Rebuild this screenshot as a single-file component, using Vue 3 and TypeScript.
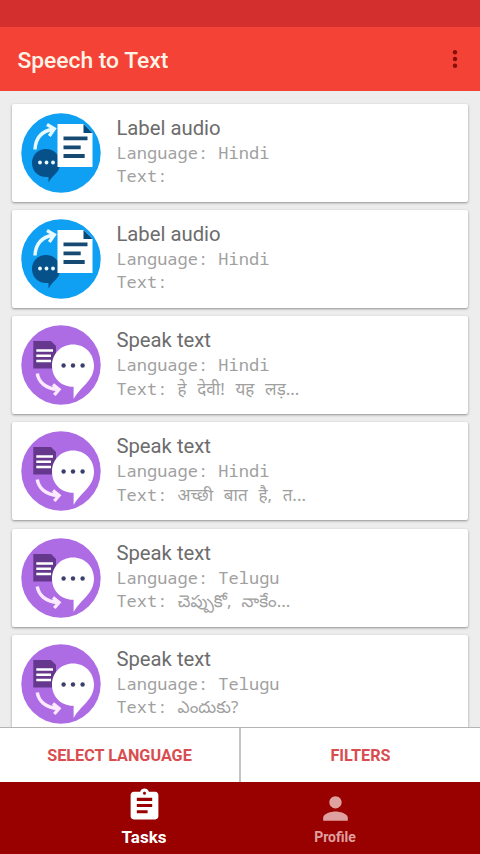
<script setup lang="ts">
interface Task {
  kind: 'label' | 'speak'
  title: string
  language: string
  text: string
  lang: string
}

const tasks: Task[] = [
  { kind: 'label', title: 'Label audio', language: 'Hindi', text: '', lang: 'hi' },
  { kind: 'label', title: 'Label audio', language: 'Hindi', text: '', lang: 'hi' },
  { kind: 'speak', title: 'Speak text', language: 'Hindi', text: 'हे देवी! यह लड़...', lang: 'hi' },
  { kind: 'speak', title: 'Speak text', language: 'Hindi', text: 'अच्छी बात है, त...', lang: 'hi' },
  { kind: 'speak', title: 'Speak text', language: 'Telugu', text: 'చెప్పుకో, నాకేం...', lang: 'te' },
  { kind: 'speak', title: 'Speak text', language: 'Telugu', text: 'ఎందుకు?', lang: 'te' },
]
</script>

<template>
  <div class="screen">
    <div class="status-bar"></div>
    <header class="app-bar">
      <h1>Speech to Text</h1>
      <svg class="more" viewBox="0 0 6 20" width="6" height="20" aria-hidden="true">
        <circle cx="3" cy="3.2" r="2.2" /><circle cx="3" cy="10" r="2.2" /><circle cx="3" cy="16.8" r="2.2" />
      </svg>
    </header>

    <main class="list">
      <article v-for="(task, i) in tasks" :key="i" class="card">
        <svg v-if="task.kind === 'label'" class="badge" viewBox="0 0 80 80" aria-hidden="true">
          <circle cx="40" cy="40" r="39.7" fill="#0fa0f3" />
          <path d="M14 36.500C14.500 25 20.500 18 32.500 16M26 11.500L33.300 15.800L28.300 23" fill="none" stroke="#e8faff" stroke-width="3.400" />
          <path d="M25 36C33 36 39 42 39 50C39 60 33 60 27.500 69.500V64C17 65 11 58 11 50C11 42 17 36 25 36Z" fill="#06518a" />
          <circle cx="19" cy="49.500" r="1.900" fill="#e8faff" /><circle cx="25.500" cy="49.500" r="1.900" fill="#e8faff" /><circle cx="32" cy="49.500" r="1.900" fill="#e8faff" />
          <path d="M36.500 11H62.500L71.500 20V54H36.500Z" fill="#fff" />
          <path d="M62.500 11L71.500 20H62.500Z" fill="#064878" />
          <path d="M42.500 25.300H66.500M42.500 34.300H59.700M42.500 43H63.700" stroke="#174a72" stroke-width="3.800" />
        </svg>
        <svg v-else class="badge" viewBox="0 0 80 80" aria-hidden="true">
          <circle cx="40" cy="40" r="39.700" fill="#ad6ce4" />
          <path d="M12.300 16H30L35 21V43.500H12.300Z" fill="#65388e" />
          <path d="M15.300 25.500H32M15.300 30.700H30M15.300 36H30" stroke="#fff" stroke-width="2.600" />
          <path d="M16.300 48.500C17.500 57 24.500 63.500 37 64.500M32 59.500L38 64.500L33.300 70" fill="none" stroke="#fbe9ff" stroke-width="3.400" />
          <path d="M52 19.600C64 19.600 73 28.800 73 40.500C73 56 60 61 52.600 74V61.700C40 62 31 52.500 31 40.700C31 29 40 19.600 52 19.600Z" fill="#fff" />
          <circle cx="42.600" cy="40.500" r="2.200" fill="#393e6d" /><circle cx="52" cy="40.500" r="2.200" fill="#393e6d" /><circle cx="61.600" cy="40.500" r="2.200" fill="#393e6d" />
        </svg>
        <div class="details">
          <h2>{{ task.title }}</h2>
          <p>Language: {{ task.language }}</p>
          <p>Text: <span class="sample" :class="task.lang" :lang="task.lang">{{ task.text }}</span></p>
        </div>
      </article>
    </main>

    <div class="actions">
      <button type="button">SELECT LANGUAGE</button>
      <button type="button">FILTERS</button>
    </div>

    <nav class="tabs">
      <a class="tab active">
        <svg viewBox="0 0 24 24" width="37" height="37" aria-hidden="true">
          <path fill="currentColor" d="M19 3h-4.180C14.400 1.840 13.300 1 12 1c-1.300 0-2.400.84-2.820 2H5c-1.100 0-2 .9-2 2v14c0 1.100.9 2 2 2h14c1.100 0 2-.9 2-2V5c0-1.100-.9-2-2-2zm-7 0c.55 0 1 .45 1 1s-.45 1-1 1-1-.45-1-1 .45-1 1-1zm2 14H7v-2h7v2zm3-4H7v-2h10v2zm0-4H7V7h10v2z" />
        </svg>
        <span>Tasks</span>
      </a>
      <a class="tab">
        <svg viewBox="0 0 24 24" width="37" height="37" aria-hidden="true">
          <path fill="currentColor" d="M12 12c2.210 0 4-1.790 4-4s-1.790-4-4-4-4 1.790-4 4 1.790 4 4 4zm0 2c-2.670 0-8 1.340-8 4v2h16v-2c0-2.660-5.330-4-8-4z" />
        </svg>
        <span>Profile</span>
      </a>
    </nav>
  </div>
</template>

<style>
body { margin: 0; overflow: hidden; }
</style>

<style scoped>
.screen {
  display: flex;
  flex-direction: column;
  width: 480px;
  height: 854px;
  overflow: hidden;
  background: #ededed;
  font-family: Roboto, "Liberation Sans", sans-serif;
}
.status-bar { flex: none; height: 27px; background: #d32f2f; }
.app-bar {
  flex: none;
  display: flex;
  align-items: center;
  justify-content: space-between;
  box-sizing: border-box;
  height: 63.5px;
  padding: 2px 22px 0 17.5px;
  background: #f44336;
}
h1 { margin: 0; padding-top: 2px; font-size: 22.8px; font-weight: 500; line-height: 28px; color: #fff3e6; }
.more { margin-bottom: 2px; fill: #850f0a; }
.list {
  flex: 1;
  min-height: 0;
  overflow: hidden;
  display: flex;
  flex-direction: column;
  gap: 8.3px;
  padding: 13px 12px 0;
}
.card {
  flex: none;
  display: flex;
  box-sizing: border-box;
  height: 98px;
  padding: 9px 8.7px;
  gap: 15.7px;
  border-radius: 2px;
  background: #fff;
  box-shadow: 0 1px 2.5px rgba(0, 0, 0, 0.4);
}
.badge { flex: none; width: 80px; height: 80px; }
.details { min-width: 0; padding-top: 2px; white-space: nowrap; }
h2 { margin: 0; font-size: 20.3px; font-weight: 400; line-height: 26px; color: #6c6c6c; }
p {
  margin: 0;
  height: 23.5px;
  font-family: "Droid Sans Mono", "Noto Sans Mono", "DejaVu Sans Mono", monospace;
  font-size: 17px;
  line-height: 23.5px;
  color: #a0a0a0;
}
.sample { font-family: "Noto Sans", "Noto Sans Devanagari", "Noto Sans Telugu", sans-serif; word-spacing: 5.5px; }
.sample.hi { word-spacing: 6.3px; }
.actions {
  flex: none;
  display: grid;
  grid-template-columns: 241px 239px;
  box-sizing: border-box;
  height: 54.5px;
  border-top: 1px solid #b4b4b4;
  background: #fff;
}
button {
  border: 0;
  padding: 2px 0 0;
  background: #fff;
  color: #d94d50;
  font: 700 16.2px/20px Roboto, "Liberation Sans", sans-serif;
}
button:first-child { border-right: 2px solid #c4c4c4; }
.tabs {
  flex: none;
  display: flex;
  justify-content: center;
  height: 72.5px;
  padding-right: 1px;
  background: #990000;
}
.tab {
  display: flex;
  flex-direction: column;
  align-items: center;
  box-sizing: border-box;
  width: 191px;
  padding-top: 8.5px;
  color: #dfa0a0;
  font-size: 14px;
  font-weight: 700;
}
.tab span { line-height: 21px; }
.tab.active { padding-top: 5px; color: #fff; font-size: 17px; }
.tab.active span { line-height: 27px; }
</style>
